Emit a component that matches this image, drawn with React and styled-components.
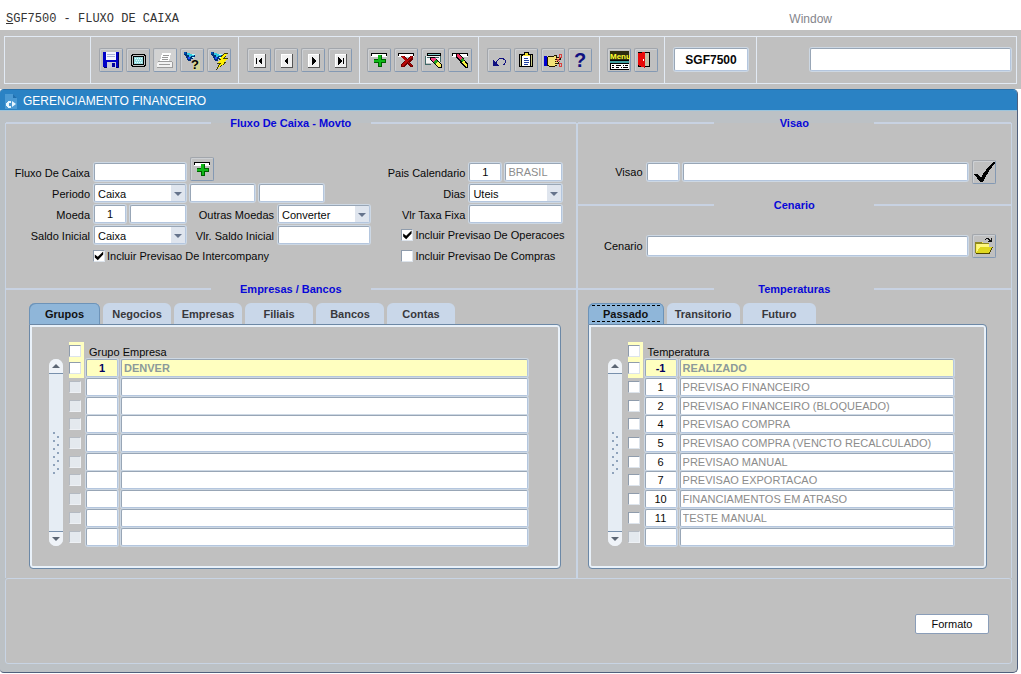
import React, { useState } from "react";
import styled, { createGlobalStyle, css } from "styled-components";

const toolGroups = [
  {
    pad: 8,
    tools: [
      { icon: "save", label: "Salvar" },
      { icon: "screen", label: "Tela" },
      { icon: "print", label: "Imprimir", disabled: true },
      { icon: "query", label: "Entrar consulta" },
      { icon: "execute", label: "Executar consulta" },
    ],
  },
  {
    pad: 8,
    tools: [
      { icon: "first", label: "Primeiro" },
      { icon: "prev", label: "Anterior" },
      { icon: "next", label: "Proximo" },
      { icon: "last", label: "Ultimo" },
    ],
  },
  {
    pad: 7,
    tools: [
      { icon: "add", label: "Inserir" },
      { icon: "remove", label: "Remover" },
      { icon: "clearForm", label: "Limpar tela" },
      { icon: "clearRow", label: "Limpar registro" },
    ],
  },
  {
    pad: 8,
    tools: [
      { icon: "undo", label: "Desfazer" },
      { icon: "clipboard", label: "Lista" },
      { icon: "cut", label: "Recortar" },
      { icon: "help", label: "Ajuda" },
    ],
  },
  {
    pad: 7,
    tools: [
      { icon: "menu", label: "Menu" },
      { icon: "exit", label: "Sair" },
    ],
  },
];

const groupTabs = ["Grupos", "Negocios", "Empresas", "Filiais", "Bancos", "Contas"];
const tempTabs = ["Passado", "Transitorio", "Futuro"];

const groupRows = [{ code: "1", name: "DENVER" }];

const tempRows = [
  { code: "-1", name: "REALIZADO" },
  { code: "1", name: "PREVISAO FINANCEIRO" },
  { code: "2", name: "PREVISAO FINANCEIRO (BLOQUEADO)" },
  { code: "4", name: "PREVISAO COMPRA" },
  { code: "5", name: "PREVISAO COMPRA (VENCTO RECALCULADO)" },
  { code: "6", name: "PREVISAO MANUAL" },
  { code: "7", name: "PREVISAO EXPORTACAO" },
  { code: "10", name: "FINANCIAMENTOS EM ATRASO" },
  { code: "11", name: "TESTE MANUAL" },
];

const VISIBLE_ROWS = 10;

const navFace = (
  <>
    <path d="M6 5h12v14H6z" fill="#fff" />
    <path d="M7 6h10v12H7z" fill="#f0f0f0" />
    <path d="M17 5h1v14H6v-1h11z" fill="#555" />
  </>
);

const flashlight = (
  <>
    <path d="M3 3h3v1h2v1h3v1h3v2h-2v2h-2v2H7v-1H6V9H5V7H4V6H3z" fill="#00307a" />
    <path d="M6 4h3v1h3v1h1v1h-3v1H8V6H6z" fill="#30c8e0" />
    <path d="M3 3h2v2H3z" fill="#0050b0" />
    <path d="M7 8h2v2H7z" fill="#2050ff" />
    <path d="M11 5h3v1h-3zM11 8h2v1h-2z" fill="#b8ffff" />
  </>
);

const rowBar = (
  <>
    <path d="M3 4h16v4H3z" fill="#fff" />
    <path d="M3 4h16v1H3zM3 5h1v2H3zM18 5h1v2h-1z" fill="#000" />
  </>
);

const icons = {
  save: (
    <>
      <path d="M3 3h15l1 1v15H4l-1-1z" fill="#0000c8" />
      <path d="M3 18h1v1h15v-1zM18 4h1v15h-1z" fill="#000060" />
      <path d="M6 3h10v8H6z" fill="#f4f4ff" />
      <path d="M7 5h8v1H7zM7 7h8v1H7z" fill="#a8b0d8" />
      <path d="M7 13h9v6H7z" fill="#c8c8d8" />
      <path d="M12 14h3v4h-3z" fill="#0000a0" />
    </>
  ),
  screen: (
    <>
      <path d="M5 5h13v1h1v11h-1v1H5v-1H4V6h1z" fill="#000" />
      <path d="M6 6h11v1h1v9h-1v1H6v-1H5V7h1z" fill="#c0c0c0" />
      <path d="M6 7h11v9H6z" fill="#000" />
      <path d="M7 8h9v7H7z" fill="#98dce0" />
      <path d="M8 9h1v1H8zM10 9h1v1h-1zM12 9h1v1h-1zM14 9h1v1h-1zM9 11h1v1H9zM11 11h1v1h-1zM13 11h1v1h-1zM8 13h1v1H8zM10 13h1v1h-1zM12 13h1v1h-1zM14 13h1v1h-1z" fill="#e0ffff" />
    </>
  ),
  print: (
    <>
      <path d="M8 4h9l-2 8H6z" fill="#fff" />
      <path d="M9 6h6v1H9zM8 8h6v1H8zM8 10h6v1H8z" fill="#999" />
      <path d="M4 12h14v3h1v4H3v-5h1z" fill="#f2f2f2" />
      <path d="M4 12h14v1H4zM3 18h16v1H3zM5 15h11v1H5zM18 13h1v5h-1z" fill="#9c9c9c" />
    </>
  ),
  query: (
    <>
      <path d="M12 11h7v10h-7z" fill="#d4d494" />
      {flashlight}
      <text x="10" y="20" fontSize="13" fontWeight="bold" fontFamily="Liberation Sans, sans-serif" fill="#000">?</text>
    </>
  ),
  execute: (
    <>
      {flashlight}
      <path d="M16 4h4l-3 5h3l-3 4h2L8 21l3-6H8l4-4h-1z" fill="#403c00" />
      <path d="M16 5h3l-4 5h4l-4 4h2l-7 5 3-5h-3l3-4h-1z" fill="#fff000" />
    </>
  ),
  first: <>{navFace}<path d="M8 9h1v6H8zM14 8v8l-4-4z" fill="#000" /></>,
  prev: <>{navFace}<path d="M13 8v8l-4-4z" fill="#000" /></>,
  next: <>{navFace}<path d="M10 8v8l4-4z" fill="#000" /></>,
  last: <>{navFace}<path d="M14 9h1v6h-1zM9 8v8l4-4z" fill="#000" /></>,
  add: (
    <>
      {rowBar}
      <path d="M10 6h4v4h4v4h-4v4h-4v-4H6v-4h4z" fill="#006000" />
      <path d="M10 6h3v5h4v2h-4v4h-2v-4H6v-2h4z" fill="#10b818" />
    </>
  ),
  remove: (
    <>
      {rowBar}
      <path d="M6 7h4l2 3 3-3h3v3l-3 3 3 4v1h-3l-3-3-3 3H6v-3l4-4-4-3z" fill="#700000" />
      <path d="M7 7h2l3 4 4-4h1v2l-4 3 4 5h-1l-4-4-4 4H7v-1l3-4-3-3z" fill="#b80808" />
    </>
  ),
  clearForm: (
    <>
      <path d="M5 4h14v5h-1v-1H5z" fill="#000" />
      <path d="M6 5h12v1H6z" fill="#80c8c8" />
      <path d="M4 7h14v7H4z" fill="#f4f4f4" />
      <path d="M3 7h1v9H3zM4 15h5v1H4zM18 7h1v6h-1zM5 8h12v1H5z" fill="#406868" />
      <path d="M8 8h5l7 8v3h-4L8 11z" fill="#000" />
      <path d="M9 9h4l1 1-3 3-2-2z" fill="#f04080" />
      <path d="M14 11l2 2-3 2-2-2z" fill="#20a020" />
      <path d="M16 13l3 3v2h-2l-4-3z" fill="#f8f060" />
    </>
  ),
  clearRow: (
    <>
      {rowBar}
      <path d="M7 5h4l8 10v4h-3L7 8z" fill="#000" />
      <path d="M8 5h2l3 4-2 2-3-4z" fill="#f03060" />
      <path d="M13 9l2 2-2 2-2-2z" fill="#20a020" />
      <path d="M15 11l3 5v2h-1l-4-5z" fill="#f8f040" />
    </>
  ),
  undo: (
    <g fill="none" stroke="#101080" strokeWidth="1">
      <path d="M8 14c2-5 6-6 9-3 1 2 0 4-2 5" />
      <path d="M5 11v6h6z" fill="#101080" stroke="none" />
    </g>
  ),
  clipboard: (
    <>
      <path d="M4 5h14v13H4z" fill="#000" />
      <path d="M5 6h12v11H5z" fill="#c8c880" />
      <path d="M6 6h10v12H6z" fill="#000" />
      <path d="M7 7h8v10H7z" fill="#fff" />
      <path d="M9 3h5v2h2v2H7V5h2z" fill="#000" />
      <path d="M10 4h3v2h2v1H8V6h2z" fill="#f0e030" />
      <path d="M9 9h4v1H9zM9 11h5v1H9zM9 13h5v1H9zM9 15h4v1H9z" fill="#2040a0" />
    </>
  ),
  cut: (
    <>
      <path d="M2 7h3v10H2z" fill="#0000d0" />
      <path d="M6 7h6V6h3v2h4v3h-3v2h1v2h-2v2h-2v1H7v-1H5V8h1z" fill="#201800" />
      <path d="M6 8h6V7h2v2h4v1h-5v1h3v1h-3v1h3v1h-3v1h2v1h-2v1H7v-1H6z" fill="#f4e478" />
      <g fill="none" stroke="#d84040">
        <path d="M14 9l4 4M14 13l4-4" />
        <path d="M17 5h2v3h-2zM17 14h2v3h-2z" />
      </g>
    </>
  ),
  help: (
    <text x="5" y="18" fontSize="20" fontWeight="bold" fontFamily="Liberation Sans, sans-serif" fill="#101080">?</text>
  ),
  menu: (
    <>
      <path d="M2 2h19v9H2z" fill="#2c2c10" />
      <text x="2" y="10" fontSize="8" fontWeight="bold" fontFamily="Liberation Sans, sans-serif" fill="#ffff30">Menu</text>
      <path d="M2 11h19v10H2z" fill="#000" />
      <path d="M2 12h19v2H2z" fill="#40a0a0" />
      <path d="M3 15h18v5H3z" fill="#fff" />
      <path d="M4 16h2v1H4zM8 16h5v1H8zM15 16h1v1h-1zM17 16h3v1h-3zM4 18h2v1H4zM8 18h3v1H8zM13 18h1v1h-1zM15 18h5v1h-5z" fill="#000" />
    </>
  ),
  exit: (
    <>
      <path d="M3 3h12v15H3z" fill="#000" />
      <path d="M10 4h4v13h-4z" fill="#c4c0a8" />
      <path d="M3 4l7-1v16l-7-3z" fill="#e80808" />
      <path d="M8 10h1v2H8z" fill="#fff" />
    </>
  ),
  check: (
    <path d="M1 13h3l4 4C11 11 15 5 21 1l1 1C17 8 13 14 10 21H7z" fill="#000" />
  ),
  folder: (
    <>
      <path d="M3 7h6l1 1h6v5H3zM3 9h2v9H3z" fill="#f8f060" />
      <path d="M3 7h6v1h7v1H3zM2 7h1v11H2z" fill="#908820" />
      <path d="M4 9h12v4H8l-4 5z" fill="#fff880" />
      <path d="M7 12h13l-4 6H3z" fill="#e0d820" />
      <path d="M3 18h14v1H3zM19 12h1l-3 6h-1z" fill="#504800" />
      <path d="M12 4h1V3h3v1h1v1h1V3h1v4h-4V6h1V5h-1V4h-2v1h-1z" fill="#111" />
    </>
  ),
};

function Icon({ name }) {
  return (
    <svg width="22" height="22" viewBox="0 0 22 22" aria-hidden="true">
      {icons[name]}
    </svg>
  );
}

function TextField({ id, label, labelWidth, ...rest }) {
  return (
    <>
      <FieldLabel htmlFor={id} $w={labelWidth}>{label}</FieldLabel>
      <Field id={id} {...rest} />
    </>
  );
}

function SelectField({ id, label, options, width }) {
  return (
    <>
      <FieldLabel htmlFor={id}>{label}</FieldLabel>
      <SelectBox $w={width}>
        <select id={id}>
          {options.map((option) => (
            <option key={option}>{option}</option>
          ))}
        </select>
      </SelectBox>
    </>
  );
}

function TabbedTable({ tabs, rows, heading, prefix, tabWidth, firstWidth, focused, margin }) {
  const [active, setActive] = useState(tabs[0]);
  const lines = Array.from({ length: VISIBLE_ROWS }, (_, i) => rows[i]);

  return (
    <TabArea $margin={margin}>
      <TabList role="tablist">
        {tabs.map((tab, i) => (
          <Tab
            key={tab}
            type="button"
            role="tab"
            aria-selected={active === tab}
            $active={active === tab}
            $w={i === 0 ? firstWidth : tabWidth}
            onClick={() => setActive(tab)}
          >
            <TabText $focused={focused && active === tab}>{tab}</TabText>
          </Tab>
        ))}
      </TabList>
      <TabPanel role="tabpanel">
        <ScrollBar>
          <ScrollButton type="button" aria-label="Acima" $up />
          <ScrollTrack><Grip /></ScrollTrack>
          <ScrollButton type="button" aria-label="Abaixo" />
        </ScrollBar>
        <DataTable>
          <thead>
            <tr>
              <CheckCell as="th" $current>
                <CheckBox type="checkbox" aria-label="Selecionar todos" />
              </CheckCell>
              <th colSpan={2}>{heading}</th>
            </tr>
          </thead>
          <tbody>
            {lines.map((row, i) => (
              <tr key={i}>
                <CheckCell $current={i === 0}>
                  <CheckBox
                    type="checkbox"
                    disabled={!row}
                    aria-label={`Selecionar ${row ? row.name : "linha " + (i + 1)}`}
                  />
                </CheckCell>
                <CodeCell>
                  <Field
                    aria-label={`${prefix} codigo ${i + 1}`}
                    defaultValue={row ? row.code : ""}
                    $center
                    $current={i === 0}
                  />
                </CodeCell>
                <td>
                  <Field
                    aria-label={`${prefix} nome ${i + 1}`}
                    defaultValue={row ? row.name : ""}
                    readOnly
                    $muted
                    $current={i === 0}
                  />
                </td>
              </tr>
            ))}
          </tbody>
        </DataTable>
      </TabPanel>
    </TabArea>
  );
}

export default function App() {
  return (
    <>
      <GlobalStyle />
      <MenuBar>
        <AppMenu href="#sgf"><u>S</u>GF7500 - FLUXO DE CAIXA</AppMenu>
        <WindowMenu href="#window">Window</WindowMenu>
      </MenuBar>

      <ToolbarArea>
        <Toolbar>
          <ToolCell $blank />
          {toolGroups.map((group, i) => (
            <ToolCell key={i} $pad={group.pad}>
              {group.tools.map((tool) => (
                <IconButton key={tool.icon} type="button" aria-label={tool.label} disabled={tool.disabled}>
                  <Icon name={tool.icon} />
                </IconButton>
              ))}
            </ToolCell>
          ))}
          <ToolCell $pad={9}>
            <ProgramField aria-label="Programa" defaultValue="SGF7500" />
          </ToolCell>
          <ToolCell $grow>
            <MessageField aria-label="Mensagem" />
          </ToolCell>
        </Toolbar>
      </ToolbarArea>

      <Window>
        <TitleBar>
          <svg width="12" height="15" viewBox="0 0 12 15" aria-hidden="true">
            <path d="M0 0h8l4 4v11H0z" fill="#4b9ad4" />
            <path d="M8 0l4 4H8z" fill="#1f6fae" />
            <path d="M3 7h3v2H4v3h2v2H3v-1H2v-1H1v-3h1V8h1z" fill="#e8f6ff" />
            <path d="M7 7l4 3-4 3z" fill="#e8f6ff" />
          </svg>
          <h1>GERENCIAMENTO FINANCEIRO</h1>
        </TitleBar>

        <Body>
          <Columns>
            <Column>
              <section>
                <SectionTitle>Fluxo De Caixa - Movto</SectionTitle>
                <FlowForm>
                  <FormColumn>
                    <FormRow $first>
                      <TextField id="fluxo" label="Fluxo De Caixa" $w={92} />
                      <IconButton type="button" aria-label="Novo fluxo"><Icon name="add" /></IconButton>
                    </FormRow>
                    <FormRow>
                      <SelectField id="periodo" label="Periodo" options={["Caixa", "Competencia"]} width={92} />
                      <Field aria-label="Data inicial" $w={65} />
                      <Field aria-label="Data final" $w={65} />
                    </FormRow>
                    <FormRow>
                      <TextField id="moeda" label="Moeda" defaultValue="1" $w={32} $center />
                      <Field aria-label="Nome da moeda" $w={56} />
                      <SelectField id="outras" label="Outras Moedas" options={["Converter", "Manter"]} width={92} />
                    </FormRow>
                    <FormRow>
                      <SelectField id="saldo" label="Saldo Inicial" options={["Caixa", "Informado"]} width={92} />
                      <TextField id="vlrSaldo" label="Vlr. Saldo Inicial" $w={92} />
                    </FormRow>
                    <FormRow $indent={87}>
                      <CheckLabel>
                        <CheckBox type="checkbox" defaultChecked />
                        Incluir Previsao De Intercompany
                      </CheckLabel>
                    </FormRow>
                  </FormColumn>
                  <FormColumn>
                    <FormRow $first>
                      <TextField id="pais" label="Pais Calendario" defaultValue="1" $w={32} $center />
                      <Field aria-label="Nome do pais" defaultValue="BRASIL" readOnly $w={57} $muted />
                    </FormRow>
                    <FormRow>
                      <SelectField id="dias" label="Dias" options={["Uteis", "Corridos"]} width={93} />
                    </FormRow>
                    <FormRow>
                      <TextField id="taxa" label="Vlr Taxa Fixa" $w={93} />
                    </FormRow>
                    <FormRow $indent={20}>
                      <CheckLabel>
                        <CheckBox type="checkbox" defaultChecked />
                        Incluir Previsao De Operacoes
                      </CheckLabel>
                    </FormRow>
                    <FormRow $indent={20}>
                      <CheckLabel>
                        <CheckBox type="checkbox" />
                        Incluir Previsao De Compras
                      </CheckLabel>
                    </FormRow>
                  </FormColumn>
                </FlowForm>
              </section>
              <section>
                <SectionTitle>Empresas / Bancos</SectionTitle>
                <TabbedTable
                  tabs={groupTabs}
                  rows={groupRows}
                  heading="Grupo Empresa"
                  prefix="Grupo"
                  firstWidth={71}
                  tabWidth={68}
                  margin="6px 15px 9px 23px"
                />
              </section>
            </Column>

            <Column>
              <section>
                <SectionTitle>Visao</SectionTitle>
                <LookupRow $top={29} $bottom={21}>
                  <TextField id="visao" label="Visao" labelWidth={65} $w={32} />
                  <Field aria-label="Nome da visao" $grow />
                  <IconButton type="button" aria-label="Confirmar"><Icon name="check" /></IconButton>
                </LookupRow>
              </section>
              <section>
                <SectionTitle>Cenario</SectionTitle>
                <LookupRow $top={21} $bottom={31}>
                  <TextField id="cenario" label="Cenario" labelWidth={65} $grow $tall />
                  <IconButton type="button" aria-label="Abrir"><Icon name="folder" /></IconButton>
                </LookupRow>
              </section>
              <section>
                <SectionTitle>Temperaturas</SectionTitle>
                <TabbedTable
                  tabs={tempTabs}
                  rows={tempRows}
                  heading="Temperatura"
                  prefix="Temperatura"
                  firstWidth={76}
                  tabWidth={73}
                  focused
                  margin="6px 24px 9px 10px"
                />
              </section>
            </Column>
          </Columns>

          <Footer>
            <FormatButton type="button">Formato</FormatButton>
          </Footer>
        </Body>
      </Window>
    </>
  );
}

const GlobalStyle = createGlobalStyle`
  * {
    box-sizing: border-box;
  }

  body {
    margin: 0;
    background-color: #fff;
    color: #080808;
    font-family: "Liberation Sans", Arial, sans-serif;
    font-size: 11px;
  }

  button, input, select {
    margin: 0;
    font-family: inherit;
    font-size: inherit;
    color: inherit;
  }
`;

const MenuBar = styled.nav`
  display: flex;
  align-items: center;
  justify-content: space-between;
  height: 30px;
  padding: 8px 189px 0 6px;
  background-color: #fff;
  font-size: 12px;

  a {
    text-decoration: none;
  }
`;

const AppMenu = styled.a`
  color: #333;
  font-family: "Liberation Mono", "Courier New", monospace;
`;

const WindowMenu = styled.a`
  color: #85858c;
`;

const ToolbarArea = styled.header`
  padding: 6px 4px 5px 4px;
  background-color: #c0c0c0;
`;

const Toolbar = styled.div`
  display: flex;
  height: 48px;
  border: 1px solid #e2eaf4;
`;

const ToolCell = styled.div`
  display: flex;
  align-items: center;
  gap: 3px;
  padding: 0 ${(p) => (p.$pad ? p.$pad - 1 : 5)}px 1px ${(p) => p.$pad || 53}px;
  border-left: 1px solid #e2eaf4;
  ${(p) => p.$blank && "width: 85px; padding: 0; border-left: none;"}
  ${(p) => p.$grow && "flex: 1;"}
`;

const IconButton = styled.button`
  flex: none;
  width: 24px;
  height: 24px;
  padding: 0;
  border: 1px solid;
  border-color: #a2a6ac #8499b3 #8499b3 #a2a6ac;
  border-radius: 2px;
  background-color: ${(p) => (p.disabled ? "#d2d2d2" : "#c0c0c0")};
  box-shadow: inset 1px 1px 0 #cdd0d4;

  svg {
    display: block;
    shape-rendering: crispEdges;
  }
`;

const fieldFrame = css`
  border: 1px solid;
  border-color: #98a6b6 #b4c6de #b4c6de #98a6b6;
  border-radius: 2px;
  box-shadow: 0 0 0 1px #cdd8e4;
  background-color: #fff;
  outline: none;
`;

const Field = styled.input`
  ${fieldFrame}
  min-width: 0;
  width: ${(p) => (p.$w ? p.$w + "px" : "100%")};
  height: ${(p) => (p.$tall ? 20 : 18)}px;
  padding: 0 ${(p) => (p.$center ? 0 : 2)}px;
  ${(p) => p.$grow && "flex: 1;"}
  ${(p) => p.$center && "text-align: center;"}
  ${(p) => p.$muted && "color: #8c8c8c;"}
  ${(p) =>
    p.$current &&
    css`
      background-color: #ffffc0;
      color: ${p.$muted ? "#8c9a9a" : "#000060"};
      font-weight: bold;
    `}
`;

const ProgramField = styled.input`
  ${fieldFrame}
  width: 74px;
  height: 23px;
  padding: 0;
  font-size: 12px;
  font-weight: bold;
  text-align: center;
`;

const MessageField = styled.input`
  ${fieldFrame}
  flex: 1;
  min-width: 0;
  height: 23px;
`;

const Window = styled.main`
  margin: 0 3px 0 0;
  border: 1px solid #50607c;
  border-left: none;
  border-top-color: #2a6fa8;
  border-radius: 4px 5px 5px 4px;
  background-color: #bcc1c5;
`;

const TitleBar = styled.div`
  display: flex;
  align-items: center;
  gap: 6px;
  height: 21px;
  padding: 2px 0 0 5px;
  border-bottom: 1px solid #9cc4dc;
  border-radius: 3px 4px 0 0;
  background-color: #2a82c4;

  h1 {
    margin: 0;
    color: #fff;
    font-size: 12px;
    font-weight: normal;
  }
`;

const Body = styled.div`
  padding: 12px 5px 8px;
`;

const Columns = styled.div`
  display: grid;
  grid-template-columns: 572fr 434fr;
  background-color: #c0c0c0;
`;

const Column = styled.div`
  border-right: 1px solid #c8d4e4;
  min-width: 0;

  &:first-child {
    border-left: 1px solid #c8d4e4;
    border-right-width: 2px;
  }

  section {
    display: flex;
    flex-direction: column;
  }
`;

const SectionTitle = styled.h2`
  display: grid;
  grid-template-columns: 1fr 160px 1fr;
  align-items: center;
  height: 16px;
  margin: -8px 0 0;
  color: #0808d8;
  font-size: 11px;
  text-align: center;

  &::before,
  &::after {
    content: "";
    height: 2px;
    background-color: #c8d2e2;
  }
`;

const FlowForm = styled.div`
  display: flex;
  justify-content: space-between;
  padding: 26px 11px 24px 0;
`;

const FormColumn = styled.div`
  display: flex;
  flex-direction: column;
  gap: 3px;
`;

const FormRow = styled.div`
  display: flex;
  align-items: flex-end;
  gap: 4px;
  height: ${(p) => (p.$first ? 24 : 18)}px;
  padding-left: ${(p) => p.$indent || 0}px;
`;

const FieldLabel = styled.label`
  width: ${(p) => p.$w || 84}px;
  line-height: 16px;
  text-align: right;
  white-space: nowrap;
`;

const SelectBox = styled.div`
  position: relative;
  width: ${(p) => p.$w}px;

  select {
    ${fieldFrame}
    display: block;
    width: 100%;
    height: 18px;
    padding: 1px 16px 0 3px;
    appearance: none;
    background-image: linear-gradient(#dfe5ee, #dfe5ee);
    background-position: right;
    background-repeat: no-repeat;
    background-size: 14px 100%;
  }

  &::after {
    content: "";
    position: absolute;
    top: 8px;
    right: 4px;
    border: 4px solid transparent;
    border-top-color: #66748c;
    border-bottom: none;
    pointer-events: none;
  }
`;

const CheckLabel = styled.label`
  display: flex;
  align-items: center;
  gap: 2px;
  height: 18px;
  white-space: nowrap;
`;

const CheckBox = styled.input`
  appearance: none;
  display: grid;
  flex: none;
  width: 12px;
  height: 12px;
  border: 1px solid;
  border-color: #8f9cac #dde4ec #dde4ec #8f9cac;
  background-color: #fff;

  &:disabled {
    background-color: #e4e9ee;
    border-color: #b4bac2 #eef1f5 #eef1f5 #b4bac2;
  }

  &:checked::after {
    content: "";
    background-color: #000;
    clip-path: polygon(8% 35%, 38% 58%, 92% 4%, 92% 36%, 38% 92%, 8% 66%);
  }
`;

const LookupRow = styled.div`
  display: flex;
  align-items: center;
  gap: 4px;
  padding: ${(p) => p.$top}px 15px ${(p) => p.$bottom}px 0;
`;

const TabArea = styled.div`
  margin: ${(p) => p.$margin};
`;

const TabList = styled.div`
  display: flex;
  gap: 3px;
`;

const Tab = styled.button`
  width: ${(p) => p.$w}px;
  height: 21px;
  padding: 0 4px;
  border: none;
  border-radius: 6px 6px 0 0;
  background-color: ${(p) => (p.$active ? "#8fb6d9" : "#c9d7e9")};
  box-shadow: ${(p) => (p.$active ? "inset 1px 1px 0 #6d93b8, inset -1px 0 0 #6d93b8" : "none")};
  color: ${(p) => (p.$active ? "#111" : "#38383c")};
  font-weight: bold;
`;

const TabText = styled.span`
  display: block;
  padding: 2px 0 1px;
  border: 1px dashed transparent;
  border-width: 1px 0;
  border-color: ${(p) => (p.$focused ? "#000" : "transparent")};
`;

const TabPanel = styled.div`
  display: flex;
  gap: 6px;
  padding: 17px 32px 22px 19px;
  border: 1px solid #6c88a6;
  border-radius: 0 4px 4px 4px;
  box-shadow: inset 0 0 0 2px #e9f1f9;
`;

const ScrollBar = styled.div`
  display: flex;
  flex-direction: column;
  width: 14px;
  margin-top: 17px;
  border-radius: 7px;
  background-color: #e6edf4;
  overflow: hidden;
`;

const ScrollButton = styled.button`
  display: grid;
  place-items: center;
  height: 15px;
  padding: 0;
  border: solid #7890ac;
  border-width: ${(p) => (p.$up ? "0 0 1px" : "1px 0 0")};
  background-color: #eff3f8;

  &::before {
    content: "";
    border: 4px solid transparent;
    border-${(p) => (p.$up ? "bottom" : "top")}-color: #5c6674;
    border-${(p) => (p.$up ? "top" : "bottom")}: none;
  }
`;

const ScrollTrack = styled.div`
  display: grid;
  place-items: center;
  flex: 1;
`;

const Grip = styled.div`
  width: 8px;
  height: 44px;
  background-image: radial-gradient(circle at 2px 2px, #8fa3bb 1px, transparent 1px),
    radial-gradient(circle at 6px 6px, #8fa3bb 1px, transparent 1px);
  background-size: 8px 8px;
`;

const DataTable = styled.table`
  flex: 1;
  height: 204px;
  border-spacing: 0;
  table-layout: fixed;

  th,
  td {
    padding: 0;
    vertical-align: middle;
  }

  thead tr {
    height: 17px;
  }

  th {
    padding: 4px 0 0 3px;
    font-weight: normal;
    line-height: 13px;
    text-align: left;
  }

  td > ${Field} {
    display: block;
  }
`;

const CheckCell = styled.td`
  && {
    width: 17px;
    padding: 0 2px 0 0;
    background-color: ${(p) => (p.$current ? "#ffffc0" : "transparent")};
    background-clip: content-box;
  }
`;

const CodeCell = styled.td`
  && {
    width: 35px;
    padding-right: 3px;
  }
`;

const Footer = styled.footer`
  display: flex;
  justify-content: flex-end;
  padding: 35px 22px 29px;
  border: 1px solid #c8d4e4;
  border-radius: 3px;
  background-color: #c0c0c0;
`;

const FormatButton = styled.button`
  width: 74px;
  height: 20px;
  padding: 0;
  border: 1px solid #8a9db8;
  border-radius: 2px;
  background-color: #fff;
`;
